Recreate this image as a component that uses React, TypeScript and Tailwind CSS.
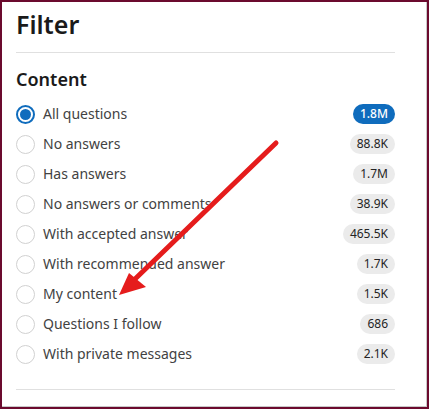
import React from 'react';

interface FilterOption {
  label: string;
  count: string;
  selected?: boolean;
}

const options: FilterOption[] = [
  { label: 'All questions', count: '1.8M', selected: true },
  { label: 'No answers', count: '88.8K' },
  { label: 'Has answers', count: '1.7M' },
  { label: 'No answers or comments', count: '38.9K' },
  { label: 'With accepted answer', count: '465.5K' },
  { label: 'With recommended answer', count: '1.7K' },
  { label: 'My content', count: '1.5K' },
  { label: 'Questions I follow', count: '686' },
  { label: 'With private messages', count: '2.1K' },
];

function Radio({ checked }: { checked?: boolean }) {
  if (checked) {
    return (
      <span className="w-[19px] h-[19px] rounded-full border-2 border-[#0f6cbd] flex items-center justify-center flex-shrink-0">
        <span className="w-[11px] h-[11px] rounded-full bg-[#0f6cbd]" />
      </span>
    );
  }
  return <span className="w-[19px] h-[19px] rounded-full border border-[#d1d1d1] flex-shrink-0" />;
}

export default function App() {
  return (
    <div
      className="relative w-[429px] h-[409px] bg-white border-2 border-[#6b0a2e] overflow-hidden"
      style={{ fontFamily: '"Noto Sans", "Open Sans", sans-serif' }}
    >
      <div className="h-full border-r border-b border-[#c8c8c8] pl-[14px] pr-[31px]">
        {/* Title */}
        <h1 className="pt-[6px] pb-[12px] text-[25px] font-semibold text-[#1a1a1a] leading-[32px] border-b border-[#e0e0e0]">
          Filter
        </h1>

        {/* Content */}
        <h2 className="mt-[14px] text-[18px] font-semibold text-[#1a1a1a] leading-[24px]">Content</h2>

        <div className="mt-[8px]">
          {options.map((opt) => (
            <div key={opt.label} className="h-[30px] flex items-center">
              <Radio checked={opt.selected} />
              <span className="ml-[8px] flex-1 text-[14px] text-[#424242] leading-none">{opt.label}</span>
              <span
                className={
                  opt.selected
                    ? 'h-[20px] px-[7px] rounded-full bg-[#0f6cbd] text-white text-[12px] font-medium flex items-center'
                    : 'h-[20px] px-[7px] rounded-full bg-[#ebebeb] text-[#242424] text-[12px] flex items-center'
                }
              >
                {opt.count}
              </span>
            </div>
          ))}
        </div>

        <div className="mt-[20px] border-b border-[#e0e0e0]" />
      </div>

      {/* Annotation arrow */}
      <svg className="absolute left-0 top-0 pointer-events-none" width="429" height="409" viewBox="0 0 429 409">
        <line x1="274" y1="141" x2="132" y2="278" stroke="#e51c1c" strokeWidth="5" strokeLinecap="round" />
        <polygon points="117,293 127,271 144,285" fill="#e51c1c" />
      </svg>
    </div>
  );
}
